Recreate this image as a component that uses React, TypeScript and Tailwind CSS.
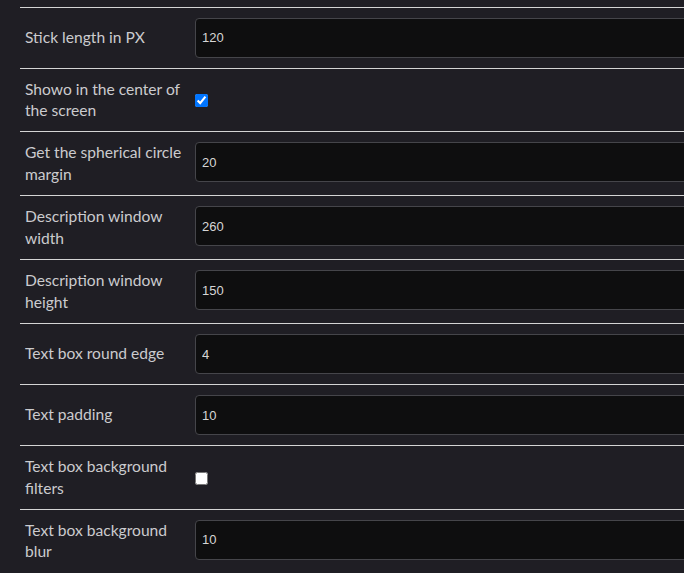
import { useState } from "react";

type Row = {
    label: string;
    kind: "number" | "check";
    value: string | boolean;
};

const rows: Row[] = [
    { label: "Stick length in PX", kind: "number", value: "120" },
    { label: "Showo in the center of the screen", kind: "check", value: true },
    { label: "Get the spherical circle margin", kind: "number", value: "20" },
    { label: "Description window width", kind: "number", value: "260" },
    { label: "Description window height", kind: "number", value: "150" },
    { label: "Text box round edge", kind: "number", value: "4" },
    { label: "Text padding", kind: "number", value: "10" },
    { label: "Text box background filters", kind: "check", value: false },
    { label: "Text box background blur", kind: "number", value: "10" },
];

function SettingRow({ row }: { row: Row }) {
    const [value, setValue] = useState(row.value);

    return (
        <div className="flex items-center border-t border-[#d4d4d4] py-[10px]">
            <div className="w-[175px] shrink-0 pl-[5px] pr-[6px] text-[15.6px] leading-[21.43px] text-[#cbcbce]">
                {row.label}
            </div>
            {row.kind === "number" ? (
                <input
                    type="text"
                    value={value as string}
                    onChange={(e) => setValue(e.target.value)}
                    className="h-[40px] flex-1 self-start rounded-[4px] border border-[#45454a] bg-[#0e0e0f] px-[6px] font-['Liberation_Sans',Arial,sans-serif] text-[13px] text-[#d6d6d6] outline-none"
                />
            ) : (
                <input
                    type="checkbox"
                    checked={value as boolean}
                    onChange={(e) => setValue(e.target.checked)}
                    className="m-0 mt-[1px] h-[13px] w-[13px]"
                />
            )}
        </div>
    );
}

export default function App() {
    return (
        <div className="h-[573px] w-full overflow-hidden bg-[#1f1e24] pt-[6.6px] font-['Lato','Noto_Sans',sans-serif]">
            <div className="ml-[20px] w-[720px]">
                {rows.map((row) => (
                    <SettingRow key={row.label} row={row} />
                ))}
            </div>
        </div>
    );
}
